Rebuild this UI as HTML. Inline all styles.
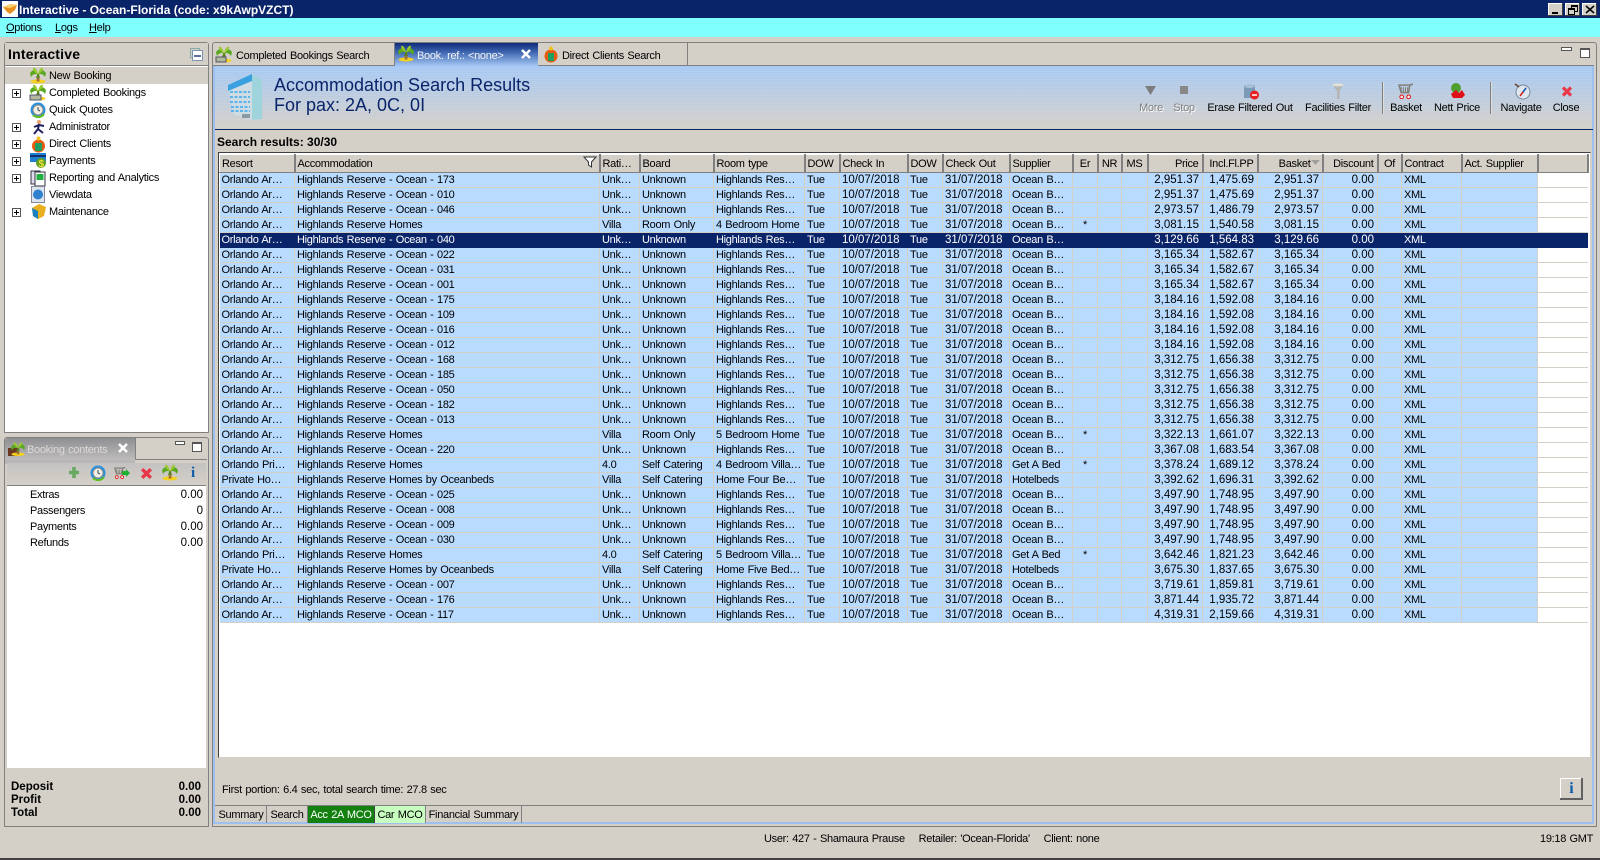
<!DOCTYPE html>
<html><head><meta charset="utf-8"><title>Interactive</title>
<style>
html,body{margin:0;padding:0;background:#d4d0c8}
body{width:1600px;height:860px;overflow:hidden;position:relative;font:11px "Liberation Sans",sans-serif;letter-spacing:-.3px;word-spacing:.7px;color:#000}
.a{position:absolute;white-space:nowrap}
.n{font-size:11.5px;letter-spacing:0;word-spacing:0}
.z{letter-spacing:0;word-spacing:0}
svg{position:absolute;overflow:visible}
u{text-decoration:underline}
table{border-collapse:collapse;table-layout:fixed;position:absolute;left:219px;top:154px;width:1368px}
th{height:17px;padding:0 2px;font-weight:normal;text-align:left;background:#d4d0c8;border-left:1px solid #fff;border-top:1px solid #fff;border-right:2px solid #808080;border-bottom:1px solid #808080;white-space:nowrap;overflow:hidden}
td{height:14px;line-height:14px;padding:0 2px;border-right:1px solid #d4d0c8;border-bottom:1px solid #d4d0c8;background:#b8dbff;white-space:nowrap;overflow:hidden}
td:last-child{background:#fff;border-right:0}
td:nth-child(7),td:nth-child(9),td:nth-child(n+14):nth-child(-n+17){font-size:11.5px;letter-spacing:0;word-spacing:0}
th:nth-child(n+14):nth-child(-n+17),td:nth-child(n+14):nth-child(-n+17){text-align:right;padding-right:3px}
th:nth-child(12),th:nth-child(13),th:nth-child(11),td:nth-child(11),th:nth-child(18){text-align:center}
tr.s td{background:#0a246a;color:#fff;border-color:#0a246a}
.tree{left:49px}
.exp{position:absolute;left:12px;width:7px;height:7px;border:1px solid #555;background:#fff}
.exp:before{content:"";position:absolute;left:1px;right:1px;top:3px;height:1px;background:#000}
.exp:after{content:"";position:absolute;top:1px;bottom:1px;left:3px;width:1px;background:#000}
.tb{top:102px;text-align:center;transform:translateX(-50%)}
.dis{color:#808080;text-shadow:1px 1px 0 #fff}
.btab{position:absolute;top:806px;height:17px;line-height:19px;text-align:center;border-right:1px solid #808080;white-space:nowrap}
</style></head><body>
<svg width="0" height="0" style="position:absolute">
<defs>
<symbol id="palm" viewBox="0 0 16 16"><ellipse cx="8" cy="14" rx="7.500" ry="2" fill="#f4d020"/><path d="M7.200 6L6.500 14h3L9.200 6z" fill="#a07030"/><path d="M8 7C6 1.500 2 1.500 0 6L1 9.500C3 6.500 5 6 8 7zM8 7C10 1.500 14 1.500 16 6L15 9.500C13 6.500 11 6 8 7z" fill="#5aa820"/><path d="M8 7C7 2 5 -.5 3 .5 3 3 5 5 8 7zM8 7C9 2 11 -.5 13 .5 13 3 11 5 8 7z" fill="#98c830"/><path d="M8 7L6.500 10.500M8 7l1.500 3.500" stroke="#3a8a18"/></symbol>
<symbol id="clock" viewBox="0 0 16 16"><circle cx="8" cy="8" r="7.500" fill="#2a90e0"/><circle cx="8" cy="8" r="5" fill="#f0f0e8" stroke="#888"/><path d="M8 5v3l2 1" stroke="#444" fill="none"/><path d="M3 13c3 3 8 3 11-1" stroke="#60c020" stroke-width="2" fill="none"/></symbol>
<symbol id="cart" viewBox="0 0 16 16"><path d="M1 2h10l-1 7H3zM11 2l3-1" fill="none" stroke="#808078" stroke-width="1.500"/><path d="M3 4v5M5 4v5M7 4v5M9 4v5" stroke="#808078"/><circle cx="3.500" cy="13" r="1.700" fill="#fff" stroke="#e01010"/><circle cx="10" cy="13" r="1.700" fill="#fff" stroke="#e01010"/></symbol>
<symbol id="x" viewBox="0 0 12 12"><path d="M2 2l8 8M10 2l-8 8" stroke="#e8384a" stroke-width="3.200"/></symbol>
</defs></svg>

<!-- title bar -->
<div class="a" style="left:0;top:0;width:1600px;height:18px;background:#0a246a"></div>
<svg style="left:2px;top:1px" width="16" height="16"><rect width="16" height="16" fill="#fff"/><path d="M1 6l8-3 6 1-2 5-5 4-3-2z" fill="#e89020"/><path d="M1 6l7 1 7-3-7-1z" fill="#f8d070"/></svg>
<div class="a z" style="left:19px;top:3px;color:#fff;font:bold 12px/14px 'Liberation Sans',sans-serif">Interactive - Ocean-Florida (code: x9kAwpVZCT)</div>
<div class="a" style="left:1548px;top:3px;width:15px;height:13px;background:#d4d0c8;box-shadow:inset -1px -1px #404040,inset 1px 1px #fff"><div class="a" style="left:4px;top:9px;width:6px;height:2px;background:#000"></div></div>
<div class="a" style="left:1565px;top:3px;width:15px;height:13px;background:#d4d0c8;box-shadow:inset -1px -1px #404040,inset 1px 1px #fff"><div class="a" style="left:6px;top:2px;width:5px;height:4px;border:1px solid #000;border-top-width:2px"></div><div class="a" style="left:3px;top:5px;width:5px;height:4px;border:1px solid #000;border-top-width:2px;background:#d4d0c8"></div></div>
<div class="a" style="left:1582px;top:3px;width:15px;height:13px;background:#d4d0c8;box-shadow:inset -1px -1px #404040,inset 1px 1px #fff"><svg style="left:4px;top:3px" width="8" height="7"><path d="M0 0l8 7M8 0L0 7" stroke="#000" stroke-width="1.500"/></svg></div>

<!-- menu -->
<div class="a" style="left:0;top:18px;width:1600px;height:19px;background:#80ffff"></div>
<div class="a" style="left:6px;top:22px"><u>O</u>ptions</div>
<div class="a" style="left:55px;top:22px"><u>L</u>ogs</div>
<div class="a" style="left:89px;top:22px"><u>H</u>elp</div>

<!-- left panel -->
<div class="a" style="left:4px;top:42px;width:203px;height:389px;border:1px solid #808080;background:#fff;border-radius:3px 3px 0 0"></div>
<div class="a" style="left:5px;top:43px;width:203px;height:22px;background:#d4d0c8;border-bottom:1px solid #808080"></div>
<div class="a" style="left:8px;top:46px;font:bold 14px/16px 'Liberation Sans',sans-serif;letter-spacing:.2px;word-spacing:0">Interactive</div>
<svg style="left:190px;top:48px" width="13" height="13"><rect x=".5" y=".5" width="9" height="9" fill="none" stroke="#8aa"/><rect x="2.500" y="2.500" width="10" height="10" fill="#fff" stroke="#7a94b0"/><path d="M4 8h7" stroke="#0a246a" stroke-width="1.300"/></svg>
<div class="a" style="left:5px;top:67px;width:203px;height:17px;background:#d4d0c8"></div>
<svg style="left:30px;top:67px" width="16" height="17"><use href="#palm" width="16" height="17"/></svg>
<svg style="left:30px;top:84px" width="16" height="17"><use href="#palm" width="16" height="17"/><rect x="0" y="11" width="11" height="5" fill="#b0b8a0" stroke="#556"/></svg>
<svg style="left:30px;top:102px" width="16" height="16"><use href="#clock" width="16" height="16"/></svg>
<svg style="left:31px;top:119px" width="15" height="16"><circle cx="8" cy="3" r="2" fill="#e8a070"/><path d="M8 5L7 10 3 15M7 10l5 4M8 6l-5 2M8 6l5 1" stroke="#202060" stroke-width="2" fill="none"/></svg>
<svg style="left:31px;top:136px" width="15" height="17"><circle cx="7.500" cy="10" r="6.500" fill="#e85a10"/><rect x="4" y="7" width="7" height="8" fill="#20a060"/><circle cx="7.500" cy="2.500" r="2" fill="#f0c020"/></svg>
<svg style="left:30px;top:153px" width="16" height="16"><rect y="0" width="16" height="9" fill="#2080d0"/><rect y="2" width="16" height="2" fill="#103070"/><circle cx="11" cy="10" r="5" fill="#60a020"/><text x="8.500" y="14" font-size="10" font-weight="bold" fill="#f0e040" font-family="Liberation Sans">$</text></svg>
<svg style="left:31px;top:170px" width="15" height="17"><rect x="0" y="1" width="9" height="13" fill="#dde" stroke="#334"/><rect x="4" y="2" width="10" height="14" fill="#fff" stroke="#334"/><rect x="5.500" y="4" width="7" height="6" fill="#20b040"/></svg>
<svg style="left:31px;top:186px" width="14" height="17"><rect x=".5" y=".5" width="13" height="16" fill="#dce4ee" stroke="#889"/><circle cx="7" cy="8.500" r="5" fill="#3080d0"/></svg>
<svg style="left:31px;top:203px" width="15" height="16"><path d="M1 5l7-4 7 3-2 9-6 3-5-3z" fill="#e8b020"/><path d="M1 5l6 3v8l-5-3z" fill="#1a80c0"/></svg>
<div class="a tree" style="top:70px">New Booking</div>
<div class="a tree" style="top:87px">Completed Bookings</div>
<div class="a tree" style="top:104px">Quick Quotes</div>
<div class="a tree" style="top:121px">Administrator</div>
<div class="a tree" style="top:138px">Direct Clients</div>
<div class="a tree" style="top:155px">Payments</div>
<div class="a tree" style="top:172px">Reporting and Analytics</div>
<div class="a tree" style="top:189px">Viewdata</div>
<div class="a tree" style="top:206px">Maintenance</div>
<div class="exp" style="top:89px"></div>
<div class="exp" style="top:123px"></div>
<div class="exp" style="top:140px"></div>
<div class="exp" style="top:157px"></div>
<div class="exp" style="top:174px"></div>
<div class="exp" style="top:208px"></div>

<!-- booking contents -->
<div class="a" style="left:4px;top:437px;width:203px;height:388px;border:1px solid #808080;border-radius:3px 3px 0 0;background:#d4d0c8"></div>
<div class="a" style="left:5px;top:438px;width:130px;height:22px;background:linear-gradient(#8f8e92,#bdbbbb);border-radius:3px 0 0 0"></div>
<div class="a" style="left:135px;top:438px;width:1px;height:22px;background:#808080"></div>
<div class="a" style="left:5px;top:460px;width:130px;height:4px;background:#b9b7b5"></div>
<div class="a" style="left:135px;top:459px;width:72px;height:1px;background:#808080"></div>
<svg style="left:8px;top:441px" width="17" height="16"><rect x="0" y="7" width="10" height="8" fill="#6a3a20"/><use href="#palm" x="3" width="14" height="16"/></svg>
<div class="a" style="left:27px;top:444px;color:#dcdad6">Booking contents</div>
<svg style="left:118px;top:443px" width="10" height="10"><path d="M1 1l8 8M9 1l-8 8" stroke="#fff" stroke-width="2.500"/></svg>
<div class="a" style="left:175px;top:441px;width:8px;height:2px;border:1px solid #555;background:#fff"></div>
<div class="a" style="left:192px;top:442px;width:8px;height:7px;border:1px solid #555;border-top-width:2px;background:#fff"></div>
<div class="a" style="left:7px;top:463px;width:199px;height:22px;background:linear-gradient(#c4c2c2,#d4d0c8);border-bottom:1px solid #808080"></div>
<svg style="left:68px;top:466px" width="12" height="13"><path d="M6 1v11M1 6.500h10" stroke="#68a860" stroke-width="3.600"/></svg>
<svg style="left:90px;top:465px" width="16" height="16"><use href="#clock" width="16" height="16"/></svg>
<svg style="left:114px;top:465px" width="16" height="16"><use href="#cart" width="13" height="16"/><path d="M8 6h4V4l4 4-4 4V10H8z" fill="#20b030"/></svg>
<svg style="left:140px;top:467px" width="13" height="13"><use href="#x" width="13" height="13"/></svg>
<svg style="left:162px;top:464px" width="16" height="17"><use href="#palm" width="16" height="17"/></svg>
<div class="a z" style="left:191px;top:465px;color:#0a5ca8;font:bold 15px/16px 'Liberation Serif',serif">i</div>
<div class="a" style="left:7px;top:486px;width:199px;height:282px;background:#fff"></div>
<div class="a" style="left:30px;top:489px">Extras</div><div class="a n" style="right:1397px;top:489px">0.00</div>
<div class="a" style="left:30px;top:505px">Passengers</div><div class="a n" style="right:1397px;top:505px">0</div>
<div class="a" style="left:30px;top:521px">Payments</div><div class="a n" style="right:1397px;top:521px">0.00</div>
<div class="a" style="left:30px;top:537px">Refunds</div><div class="a n" style="right:1397px;top:537px">0.00</div>
<div class="a z" style="left:11px;top:781px;font:bold 11.500px/13px 'Liberation Sans',sans-serif">Deposit</div><div class="a z" style="right:1399px;top:781px;font:bold 11.500px/13px 'Liberation Sans',sans-serif">0.00</div>
<div class="a z" style="left:11px;top:794px;font:bold 11.500px/13px 'Liberation Sans',sans-serif">Profit</div><div class="a z" style="right:1399px;top:794px;font:bold 11.500px/13px 'Liberation Sans',sans-serif">0.00</div>
<div class="a z" style="left:11px;top:807px;font:bold 11.500px/13px 'Liberation Sans',sans-serif">Total</div><div class="a z" style="right:1399px;top:807px;font:bold 11.500px/13px 'Liberation Sans',sans-serif">0.00</div>

<!-- main panel -->
<div class="a" style="left:212px;top:42px;width:1383px;height:783px;border:1px solid #808080;border-radius:3px 3px 0 0;background:#d4d0c8"></div>
<div class="a" style="left:213px;top:65px;width:1381px;height:759px;border:0 solid #9dc0f0;border-width:0 2px 2px 2px;box-sizing:border-box"></div>
<div class="a" style="left:213px;top:65px;width:1381px;height:1px;background:#808080"></div>
<!-- tabs -->
<div class="a" style="left:394px;top:43px;width:1px;height:22px;background:#808080"></div>
<div class="a" style="left:687px;top:43px;width:1px;height:22px;background:#808080"></div>
<svg style="left:216px;top:46px" width="16" height="17"><use href="#palm" width="16" height="17"/><rect x="0" y="11" width="10" height="5" fill="#b0b8a0" stroke="#556"/></svg>
<div class="a" style="left:236px;top:50px">Completed Bookings Search</div>
<svg style="left:544px;top:46px" width="14" height="17"><circle cx="7" cy="10" r="6.500" fill="#e85a10"/><rect x="4" y="7" width="6" height="8" fill="#20a060"/><circle cx="7" cy="2.500" r="2" fill="#f0c020"/></svg>
<div class="a" style="left:562px;top:50px">Direct Clients Search</div>
<div class="a" style="left:1561px;top:47px;width:9px;height:2px;border:1px solid #555;background:#fff"></div>
<div class="a" style="left:1580px;top:48px;width:8px;height:7px;border:1px solid #555;border-top-width:2px;background:#fff"></div>
<!-- banner -->
<div class="a" style="left:215px;top:66px;width:1377px;height:63px;background:repeating-linear-gradient(transparent 0 1px,rgba(255,255,255,.09) 1px 2px),linear-gradient(#a6c8f4,#d4d0c8)"></div>
<div class="a" style="left:395px;top:43px;width:143px;height:23px;background:linear-gradient(#0f2c78 0,#3f66b0 40%,#a6c8f4 100%)"></div>
<div class="a" style="left:417px;top:50px;color:#f4f4f4">Book. ref.: &lt;none&gt;</div>
<svg style="left:398px;top:45px" width="16" height="17"><use href="#palm" width="16" height="17"/></svg>
<svg style="left:521px;top:49px" width="10" height="10"><path d="M1 1l8 8M9 1l-8 8" stroke="#fff" stroke-width="2.500"/></svg>
<div class="a" style="left:215px;top:129px;width:1378px;height:1px;background:#0a246a"></div>
<svg style="left:228px;top:73px" width="35" height="48"><path d="M0 12L24 1 34 7V46L24 47 5 41z" fill="#d0dce4"/><path d="M24 1l10 6v39l-10 1z" fill="#a0d4dc"/><path d="M0 12L24 1V8L0 18z" fill="#3aa0e0"/><path d="M2 19h20M2 24h20M2 29h20M3 34h19M3 38h19" stroke="#5cb4ea" stroke-width="2" stroke-dasharray="3 1.500"/><rect x="14" y="41" width="8" height="4" fill="#8a9aa4"/></svg>
<div class="a z" style="left:274px;top:75px;color:#0a246a;font:18px/20px 'Liberation Sans',sans-serif">Accommodation Search Results</div>
<div class="a z" style="left:274px;top:95px;color:#0a246a;font:18px/20px 'Liberation Sans',sans-serif">For pax: 2A, 0C, 0I</div>
<!-- toolbar -->
<svg style="left:1145px;top:85px" width="12" height="11"><path d="M0 1h11L5.500 10z" fill="#7c7c7c"/></svg>
<svg style="left:1180px;top:86px" width="9" height="9"><rect width="8" height="8" fill="#888"/></svg>
<svg style="left:1244px;top:84px" width="16" height="16"><path d="M0 1h11v13H0z" fill="#7a9ab8"/><ellipse cx="5.500" cy="2" rx="5.500" ry="2" fill="#a8c0d4"/><circle cx="10.500" cy="11" r="4.500" fill="#e82020"/><path d="M8 11h5" stroke="#fff" stroke-width="1.500"/></svg>
<svg style="left:1332px;top:83px" width="13" height="16"><path d="M0 1h12L7.500 8v8H5V8z" fill="#b4b4b0"/><ellipse cx="6" cy="2" rx="6" ry="1.500" fill="#e0e0d8"/></svg>
<div class="a" style="left:1382px;top:82px;width:1px;height:32px;background:#808080;box-shadow:1px 0 #ddd"></div>
<div class="a" style="left:1490px;top:82px;width:1px;height:32px;background:#808080;box-shadow:1px 0 #ddd"></div>
<svg style="left:1398px;top:83px" width="17" height="17"><use href="#cart" width="17" height="17"/></svg>
<svg style="left:1450px;top:83px" width="16" height="16"><circle cx="6" cy="5" r="5" fill="#50a030"/><path d="M1 11l5-4 3 3 3-3 3 5-3 3H3z" fill="#e01018"/></svg>
<svg style="left:1514px;top:83px" width="17" height="17"><circle cx="9" cy="9" r="7" fill="#dfe8f0" stroke="#789"/><path d="M12 5L9 9 6 13" stroke="#d02020" stroke-width="1.500"/><path d="M12 5L9 9" stroke="#1060c0" stroke-width="1.500"/><path d="M1 1l4 3" stroke="#643" stroke-width="1.500"/></svg>
<svg style="left:1561px;top:85px" width="12" height="13"><use href="#x" width="12" height="13"/></svg>
<div class="a tb dis" style="left:1151px">More</div>
<div class="a tb dis" style="left:1184px">Stop</div>
<div class="a tb" style="left:1250px">Erase Filtered Out</div>
<div class="a tb" style="left:1338px">Facilities Filter</div>
<div class="a tb" style="left:1406px">Basket</div>
<div class="a tb" style="left:1457px">Nett Price</div>
<div class="a tb" style="left:1521px">Navigate</div>
<div class="a tb" style="left:1566px">Close</div>

<div class="a z" style="left:217px;top:135px;font:bold 12px/14px 'Liberation Sans',sans-serif">Search results: 30/30</div>

<!-- grid -->
<div class="a" style="left:218px;top:152px;width:1371px;height:604px;background:#fff;border:solid;border-color:#404040 #d4d0c8 #d4d0c8 #404040;border-width:1px"></div>
<div class="a" style="left:220px;top:154px;width:1368px;height:1px;background:#fff"></div>
<table>
<colgroup><col style="width:75px"><col style="width:305px"><col style="width:40px"><col style="width:74px"><col style="width:91px"><col style="width:35px"><col style="width:68px"><col style="width:35px"><col style="width:67px"><col style="width:63px"><col style="width:25px"><col style="width:24px"><col style="width:26px"><col style="width:55px"><col style="width:55px"><col style="width:65px"><col style="width:55px"><col style="width:24px"><col style="width:60px"><col style="width:76px"><col style="width:50px"></colgroup>
<thead><tr><th>Resort</th><th>Accommodation</th><th>Rati…</th><th>Board</th><th>Room type</th><th>DOW</th><th>Check In</th><th>DOW</th><th>Check Out</th><th>Supplier</th><th>Er</th><th>NR</th><th>MS</th><th>Price</th><th>Incl.Fl.PP</th><th style="padding-right:11px">Basket</th><th>Discount</th><th>Of</th><th>Contract</th><th>Act. Supplier</th><th></th></tr></thead>
<tbody>
<tr><td>Orlando Ar…</td><td>Highlands Reserve - Ocean - 173</td><td>Unk…</td><td>Unknown</td><td>Highlands Res…</td><td>Tue</td><td>10/07/2018</td><td>Tue</td><td>31/07/2018</td><td>Ocean B…</td><td></td><td></td><td></td><td>2,951.37</td><td>1,475.69</td><td>2,951.37</td><td>0.00</td><td></td><td>XML</td><td></td><td></td></tr>
<tr><td>Orlando Ar…</td><td>Highlands Reserve - Ocean - 010</td><td>Unk…</td><td>Unknown</td><td>Highlands Res…</td><td>Tue</td><td>10/07/2018</td><td>Tue</td><td>31/07/2018</td><td>Ocean B…</td><td></td><td></td><td></td><td>2,951.37</td><td>1,475.69</td><td>2,951.37</td><td>0.00</td><td></td><td>XML</td><td></td><td></td></tr>
<tr><td>Orlando Ar…</td><td>Highlands Reserve - Ocean - 046</td><td>Unk…</td><td>Unknown</td><td>Highlands Res…</td><td>Tue</td><td>10/07/2018</td><td>Tue</td><td>31/07/2018</td><td>Ocean B…</td><td></td><td></td><td></td><td>2,973.57</td><td>1,486.79</td><td>2,973.57</td><td>0.00</td><td></td><td>XML</td><td></td><td></td></tr>
<tr><td>Orlando Ar…</td><td>Highlands Reserve Homes</td><td>Villa</td><td>Room Only</td><td>4 Bedroom Home</td><td>Tue</td><td>10/07/2018</td><td>Tue</td><td>31/07/2018</td><td>Ocean B…</td><td>*</td><td></td><td></td><td>3,081.15</td><td>1,540.58</td><td>3,081.15</td><td>0.00</td><td></td><td>XML</td><td></td><td></td></tr>
<tr class="s"><td>Orlando Ar…</td><td>Highlands Reserve - Ocean - 040</td><td>Unk…</td><td>Unknown</td><td>Highlands Res…</td><td>Tue</td><td>10/07/2018</td><td>Tue</td><td>31/07/2018</td><td>Ocean B…</td><td></td><td></td><td></td><td>3,129.66</td><td>1,564.83</td><td>3,129.66</td><td>0.00</td><td></td><td>XML</td><td></td><td style="background:#0a246a"></td></tr>
<tr><td>Orlando Ar…</td><td>Highlands Reserve - Ocean - 022</td><td>Unk…</td><td>Unknown</td><td>Highlands Res…</td><td>Tue</td><td>10/07/2018</td><td>Tue</td><td>31/07/2018</td><td>Ocean B…</td><td></td><td></td><td></td><td>3,165.34</td><td>1,582.67</td><td>3,165.34</td><td>0.00</td><td></td><td>XML</td><td></td><td></td></tr>
<tr><td>Orlando Ar…</td><td>Highlands Reserve - Ocean - 031</td><td>Unk…</td><td>Unknown</td><td>Highlands Res…</td><td>Tue</td><td>10/07/2018</td><td>Tue</td><td>31/07/2018</td><td>Ocean B…</td><td></td><td></td><td></td><td>3,165.34</td><td>1,582.67</td><td>3,165.34</td><td>0.00</td><td></td><td>XML</td><td></td><td></td></tr>
<tr><td>Orlando Ar…</td><td>Highlands Reserve - Ocean - 001</td><td>Unk…</td><td>Unknown</td><td>Highlands Res…</td><td>Tue</td><td>10/07/2018</td><td>Tue</td><td>31/07/2018</td><td>Ocean B…</td><td></td><td></td><td></td><td>3,165.34</td><td>1,582.67</td><td>3,165.34</td><td>0.00</td><td></td><td>XML</td><td></td><td></td></tr>
<tr><td>Orlando Ar…</td><td>Highlands Reserve - Ocean - 175</td><td>Unk…</td><td>Unknown</td><td>Highlands Res…</td><td>Tue</td><td>10/07/2018</td><td>Tue</td><td>31/07/2018</td><td>Ocean B…</td><td></td><td></td><td></td><td>3,184.16</td><td>1,592.08</td><td>3,184.16</td><td>0.00</td><td></td><td>XML</td><td></td><td></td></tr>
<tr><td>Orlando Ar…</td><td>Highlands Reserve - Ocean - 109</td><td>Unk…</td><td>Unknown</td><td>Highlands Res…</td><td>Tue</td><td>10/07/2018</td><td>Tue</td><td>31/07/2018</td><td>Ocean B…</td><td></td><td></td><td></td><td>3,184.16</td><td>1,592.08</td><td>3,184.16</td><td>0.00</td><td></td><td>XML</td><td></td><td></td></tr>
<tr><td>Orlando Ar…</td><td>Highlands Reserve - Ocean - 016</td><td>Unk…</td><td>Unknown</td><td>Highlands Res…</td><td>Tue</td><td>10/07/2018</td><td>Tue</td><td>31/07/2018</td><td>Ocean B…</td><td></td><td></td><td></td><td>3,184.16</td><td>1,592.08</td><td>3,184.16</td><td>0.00</td><td></td><td>XML</td><td></td><td></td></tr>
<tr><td>Orlando Ar…</td><td>Highlands Reserve - Ocean - 012</td><td>Unk…</td><td>Unknown</td><td>Highlands Res…</td><td>Tue</td><td>10/07/2018</td><td>Tue</td><td>31/07/2018</td><td>Ocean B…</td><td></td><td></td><td></td><td>3,184.16</td><td>1,592.08</td><td>3,184.16</td><td>0.00</td><td></td><td>XML</td><td></td><td></td></tr>
<tr><td>Orlando Ar…</td><td>Highlands Reserve - Ocean - 168</td><td>Unk…</td><td>Unknown</td><td>Highlands Res…</td><td>Tue</td><td>10/07/2018</td><td>Tue</td><td>31/07/2018</td><td>Ocean B…</td><td></td><td></td><td></td><td>3,312.75</td><td>1,656.38</td><td>3,312.75</td><td>0.00</td><td></td><td>XML</td><td></td><td></td></tr>
<tr><td>Orlando Ar…</td><td>Highlands Reserve - Ocean - 185</td><td>Unk…</td><td>Unknown</td><td>Highlands Res…</td><td>Tue</td><td>10/07/2018</td><td>Tue</td><td>31/07/2018</td><td>Ocean B…</td><td></td><td></td><td></td><td>3,312.75</td><td>1,656.38</td><td>3,312.75</td><td>0.00</td><td></td><td>XML</td><td></td><td></td></tr>
<tr><td>Orlando Ar…</td><td>Highlands Reserve - Ocean - 050</td><td>Unk…</td><td>Unknown</td><td>Highlands Res…</td><td>Tue</td><td>10/07/2018</td><td>Tue</td><td>31/07/2018</td><td>Ocean B…</td><td></td><td></td><td></td><td>3,312.75</td><td>1,656.38</td><td>3,312.75</td><td>0.00</td><td></td><td>XML</td><td></td><td></td></tr>
<tr><td>Orlando Ar…</td><td>Highlands Reserve - Ocean - 182</td><td>Unk…</td><td>Unknown</td><td>Highlands Res…</td><td>Tue</td><td>10/07/2018</td><td>Tue</td><td>31/07/2018</td><td>Ocean B…</td><td></td><td></td><td></td><td>3,312.75</td><td>1,656.38</td><td>3,312.75</td><td>0.00</td><td></td><td>XML</td><td></td><td></td></tr>
<tr><td>Orlando Ar…</td><td>Highlands Reserve - Ocean - 013</td><td>Unk…</td><td>Unknown</td><td>Highlands Res…</td><td>Tue</td><td>10/07/2018</td><td>Tue</td><td>31/07/2018</td><td>Ocean B…</td><td></td><td></td><td></td><td>3,312.75</td><td>1,656.38</td><td>3,312.75</td><td>0.00</td><td></td><td>XML</td><td></td><td></td></tr>
<tr><td>Orlando Ar…</td><td>Highlands Reserve Homes</td><td>Villa</td><td>Room Only</td><td>5 Bedroom Home</td><td>Tue</td><td>10/07/2018</td><td>Tue</td><td>31/07/2018</td><td>Ocean B…</td><td>*</td><td></td><td></td><td>3,322.13</td><td>1,661.07</td><td>3,322.13</td><td>0.00</td><td></td><td>XML</td><td></td><td></td></tr>
<tr><td>Orlando Ar…</td><td>Highlands Reserve - Ocean - 220</td><td>Unk…</td><td>Unknown</td><td>Highlands Res…</td><td>Tue</td><td>10/07/2018</td><td>Tue</td><td>31/07/2018</td><td>Ocean B…</td><td></td><td></td><td></td><td>3,367.08</td><td>1,683.54</td><td>3,367.08</td><td>0.00</td><td></td><td>XML</td><td></td><td></td></tr>
<tr><td>Orlando Pri…</td><td>Highlands Reserve Homes</td><td>4.0</td><td>Self Catering</td><td>4 Bedroom Villa…</td><td>Tue</td><td>10/07/2018</td><td>Tue</td><td>31/07/2018</td><td>Get A Bed</td><td>*</td><td></td><td></td><td>3,378.24</td><td>1,689.12</td><td>3,378.24</td><td>0.00</td><td></td><td>XML</td><td></td><td></td></tr>
<tr><td>Private Ho…</td><td>Highlands Reserve Homes by Oceanbeds</td><td>Villa</td><td>Self Catering</td><td>Home Four Be…</td><td>Tue</td><td>10/07/2018</td><td>Tue</td><td>31/07/2018</td><td>Hotelbeds</td><td></td><td></td><td></td><td>3,392.62</td><td>1,696.31</td><td>3,392.62</td><td>0.00</td><td></td><td>XML</td><td></td><td></td></tr>
<tr><td>Orlando Ar…</td><td>Highlands Reserve - Ocean - 025</td><td>Unk…</td><td>Unknown</td><td>Highlands Res…</td><td>Tue</td><td>10/07/2018</td><td>Tue</td><td>31/07/2018</td><td>Ocean B…</td><td></td><td></td><td></td><td>3,497.90</td><td>1,748.95</td><td>3,497.90</td><td>0.00</td><td></td><td>XML</td><td></td><td></td></tr>
<tr><td>Orlando Ar…</td><td>Highlands Reserve - Ocean - 008</td><td>Unk…</td><td>Unknown</td><td>Highlands Res…</td><td>Tue</td><td>10/07/2018</td><td>Tue</td><td>31/07/2018</td><td>Ocean B…</td><td></td><td></td><td></td><td>3,497.90</td><td>1,748.95</td><td>3,497.90</td><td>0.00</td><td></td><td>XML</td><td></td><td></td></tr>
<tr><td>Orlando Ar…</td><td>Highlands Reserve - Ocean - 009</td><td>Unk…</td><td>Unknown</td><td>Highlands Res…</td><td>Tue</td><td>10/07/2018</td><td>Tue</td><td>31/07/2018</td><td>Ocean B…</td><td></td><td></td><td></td><td>3,497.90</td><td>1,748.95</td><td>3,497.90</td><td>0.00</td><td></td><td>XML</td><td></td><td></td></tr>
<tr><td>Orlando Ar…</td><td>Highlands Reserve - Ocean - 030</td><td>Unk…</td><td>Unknown</td><td>Highlands Res…</td><td>Tue</td><td>10/07/2018</td><td>Tue</td><td>31/07/2018</td><td>Ocean B…</td><td></td><td></td><td></td><td>3,497.90</td><td>1,748.95</td><td>3,497.90</td><td>0.00</td><td></td><td>XML</td><td></td><td></td></tr>
<tr><td>Orlando Pri…</td><td>Highlands Reserve Homes</td><td>4.0</td><td>Self Catering</td><td>5 Bedroom Villa…</td><td>Tue</td><td>10/07/2018</td><td>Tue</td><td>31/07/2018</td><td>Get A Bed</td><td>*</td><td></td><td></td><td>3,642.46</td><td>1,821.23</td><td>3,642.46</td><td>0.00</td><td></td><td>XML</td><td></td><td></td></tr>
<tr><td>Private Ho…</td><td>Highlands Reserve Homes by Oceanbeds</td><td>Villa</td><td>Self Catering</td><td>Home Five Bed…</td><td>Tue</td><td>10/07/2018</td><td>Tue</td><td>31/07/2018</td><td>Hotelbeds</td><td></td><td></td><td></td><td>3,675.30</td><td>1,837.65</td><td>3,675.30</td><td>0.00</td><td></td><td>XML</td><td></td><td></td></tr>
<tr><td>Orlando Ar…</td><td>Highlands Reserve - Ocean - 007</td><td>Unk…</td><td>Unknown</td><td>Highlands Res…</td><td>Tue</td><td>10/07/2018</td><td>Tue</td><td>31/07/2018</td><td>Ocean B…</td><td></td><td></td><td></td><td>3,719.61</td><td>1,859.81</td><td>3,719.61</td><td>0.00</td><td></td><td>XML</td><td></td><td></td></tr>
<tr><td>Orlando Ar…</td><td>Highlands Reserve - Ocean - 176</td><td>Unk…</td><td>Unknown</td><td>Highlands Res…</td><td>Tue</td><td>10/07/2018</td><td>Tue</td><td>31/07/2018</td><td>Ocean B…</td><td></td><td></td><td></td><td>3,871.44</td><td>1,935.72</td><td>3,871.44</td><td>0.00</td><td></td><td>XML</td><td></td><td></td></tr>
<tr><td>Orlando Ar…</td><td>Highlands Reserve - Ocean - 117</td><td>Unk…</td><td>Unknown</td><td>Highlands Res…</td><td>Tue</td><td>10/07/2018</td><td>Tue</td><td>31/07/2018</td><td>Ocean B…</td><td></td><td></td><td></td><td>4,319.31</td><td>2,159.66</td><td>4,319.31</td><td>0.00</td><td></td><td>XML</td><td></td><td></td></tr>
</tbody></table>
<svg style="left:583px;top:156px" width="14" height="12"><path d="M1 1h12L8.500 6v5L5.500 9V6z" fill="#fff" stroke="#333"/></svg>
<svg style="left:1311px;top:160px" width="9" height="6"><path d="M0 0h9L4.500 5z" fill="#a0a0a0"/></svg>

<!-- bottom of main -->
<div class="a" style="left:222px;top:784px">First portion: 6.4 sec, total search time: 27.8 sec</div>
<div class="a z" style="left:1560px;top:778px;width:23px;height:22px;background:#d4d0c8;box-shadow:inset -2px -2px #606060,inset 1px 1px #fff;color:#0a5ca8;font:bold 16px/21px 'Liberation Serif',serif;text-align:center">i</div>
<div class="a" style="left:215px;top:805px;width:1377px;height:1px;background:#808080"></div>
<div class="btab" style="left:216px;width:50px">Summary</div>
<div class="btab" style="left:267px;width:40px">Search</div>
<div class="btab" style="left:308px;width:66px;background:#138010;color:#fff;border-right-color:#444">Acc 2A MCO</div>
<div class="btab" style="left:375px;width:50px;background:#c8ffc0">Car MCO</div>
<div class="btab" style="left:426px;width:95px">Financial Summary</div>

<!-- status -->
<div class="a" style="left:764px;top:833px">User: 427 - Shamaura Prause &nbsp;&nbsp;&nbsp;Retailer: 'Ocean-Florida' &nbsp;&nbsp;&nbsp;Client: none</div>
<div class="a" style="left:1540px;top:833px">19:18 GMT</div>
<div class="a" style="left:0;top:858px;width:1600px;height:2px;background:#404040"></div>
</body></html>
